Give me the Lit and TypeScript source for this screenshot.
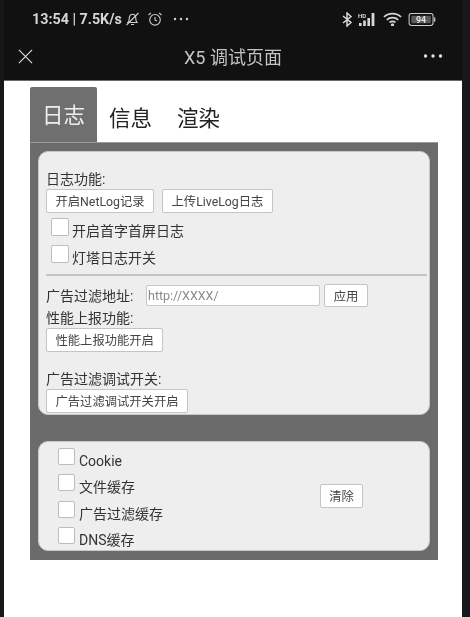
import { LitElement, html, css } from "lit";
import { customElement } from "lit/decorators.js";

@customElement("app-root")
export class AppRoot extends LitElement {
  static styles = css`
    :host {
      display: block;
      width: 470px;
      height: 617px;
      overflow: hidden;
      background: #17181a;
      font-family: "Roboto", "Noto Sans CJK SC", sans-serif;
      color: #333;
    }
    .screen {
      margin-left: 4px;
      width: 458px;
      height: 617px;
      background: #fff;
      filter: blur(0.3px);
    }
    .top {
      background: #111112;
      height: 80px;
      border-bottom: 1px solid #6a6a6a;
    }
    .status {
      height: 40px;
      display: flex;
      align-items: center;
      padding: 0 26px 2px 28px;
      box-sizing: border-box;
      color: #d6d6d6;
    }
    .time {
      font-size: 14.3px;
      font-weight: 700;
      white-space: nowrap;
    }
    .sicons {
      display: flex;
      align-items: center;
      gap: 7px;
      margin-left: 3px;
    }
    .ricons {
      display: flex;
      align-items: center;
      gap: 6px;
      margin-left: auto;
    }
    svg {
      display: block;
      flex: none;
    }
    .nav {
      height: 40px;
      display: grid;
      grid-template-columns: 60px 1fr 60px;
      align-items: center;
      padding-bottom: 8px;
      box-sizing: border-box;
    }
    .close {
      margin-left: 14px;
    }
    .title {
      text-align: center;
      font-size: 18px;
      color: #c4c4c4;
      white-space: nowrap;
    }
    .more {
      justify-self: end;
      margin-right: 19px;
    }
    .tabs {
      display: flex;
      align-items: flex-end;
      margin: 6px 0 0 26px;
      height: 55px;
    }
    .tab {
      font-size: 21.5px;
      color: #222;
      line-height: 30px;
      padding-bottom: 8px;
      margin-right: 25px;
    }
    .tab.active {
      width: 67px;
      height: 55px;
      box-sizing: border-box;
      background: #6f6f6f;
      border-radius: 2px 2px 0 0;
      color: #eee;
      text-align: center;
      line-height: 57px;
      padding: 0;
      margin-right: 12px;
    }
    .panel {
      margin-left: 26px;
      width: 408px;
      height: 418px;
      box-sizing: border-box;
      background: #6b6b6b;
      border-top: 1px solid #9a9a9a;
      padding: 8px;
    }
    .card {
      box-sizing: border-box;
      background: #eee;
      border: 1px solid #c8c8c8;
      border-radius: 10px;
    }
    .log {
      height: 264px;
      padding: 18px 0 0 7px;
    }
    .label {
      font-size: 14px;
      line-height: 18px;
      color: #333;
      white-space: nowrap;
    }
    .btn {
      box-sizing: border-box;
      height: 24px;
      display: inline-flex;
      align-items: center;
      justify-content: center;
      background: #fff;
      border: 1px solid #c4c4c4;
      border-radius: 2px;
      font-size: 12.3px;
      color: #444;
      white-space: nowrap;
      padding: 0 8.5px;
    }
    .row {
      display: flex;
      gap: 8px;
      margin-top: 1px;
    }
    .check {
      display: flex;
      gap: 3px;
      height: 22px;
      margin: 5px 0 0 5px;
    }
    .box {
      box-sizing: border-box;
      width: 18px;
      height: 18px;
      background: #fff;
      border: 1px solid #bdbdbd;
      border-radius: 2px;
    }
    .check .label {
      margin-top: 4px;
    }
    hr {
      border: 0;
      height: 2px;
      background: #c4c4c4;
      margin: 7px 2px 8px 0;
    }
    .addr {
      display: flex;
      align-items: center;
      height: 23px;
    }
    .addr .label {
      width: 100px;
    }
    .input {
      box-sizing: border-box;
      width: 174px;
      height: 21px;
      background: #fff;
      border: 1px solid #c8c8c8;
      border-radius: 2px;
      font-size: 12.5px;
      line-height: 19px;
      color: #8a8a8a;
      padding-left: 1px;
    }
    .apply {
      width: 44px;
      height: 23px;
      margin-left: 4px;
      padding: 0;
    }
    .perf {
      margin-top: 2px;
    }
    .ad {
      margin-top: 18px;
    }
    .cache {
      height: 110px;
      margin-top: 26px;
      display: flex;
      align-items: flex-start;
      padding: 6px 0 0 19px;
    }
    .items {
      width: 262px;
      display: flex;
      flex-direction: column;
      gap: 4.3px;
    }
    .item {
      display: flex;
      gap: 4px;
      height: 22px;
    }
    .item .box {
      width: 17px;
      height: 17px;
    }
    .item .label {
      margin-top: 4px;
    }
    .clear {
      width: 43px;
      margin-top: 36px;
      padding: 0;
    }
  `;

  private checkRow(t: string) {
    return html`<div class="check"><span class="box"></span><span class="label">${t}</span></div>`;
  }

  private item(t: string) {
    return html`<div class="item"><span class="box"></span><span class="label">${t}</span></div>`;
  }

  render() {
    return html`
      <div class="screen">
        <div class="top">
          <div class="status">
            <span class="time">13:54 | 7.5K/s</span>
            <div class="sicons">
              <svg width="15" height="16" viewBox="0 0 15 16" fill="none" stroke="#cfcfcf" stroke-width="1.1">
                <path d="M3 11.5c1-1 1.2-2 1.2-4C4.200 5 5.700 3.300 7.500 3.300S10.800 5 10.800 7.500c0 2 .2 3 1.200 4z" />
                <path d="M6 13.500h3M1.500 14L13.500 2" />
              </svg>
              <svg width="16" height="16" viewBox="0 0 16 16" fill="none" stroke="#cfcfcf" stroke-width="1.1">
                <circle cx="8" cy="8.800" r="5.300" />
                <path d="M8 6v3l2 1M1.500 4L4 1.800M14.500 4L12 1.800" />
              </svg>
            </div>
            <svg width="27" height="16" viewBox="0 0 27 16" fill="#d6d6d6">
              <circle cx="12" cy="8" r="1.200" /><circle cx="18" cy="8" r="1.200" /><circle cx="24" cy="8" r="1.200" />
            </svg>
            <div class="ricons">
              <svg width="10" height="15" viewBox="0 0 10 15" fill="none" stroke="#d6d6d6" stroke-width="1.500">
                <path d="M1 4l8 6.500L5 14V1l4 3.500L1 11" />
              </svg>
              <svg width="19" height="14" viewBox="0 0 19 14">
                <text x="0" y="5.500" font-size="6" font-weight="700" fill="#d6d6d6" font-family="Roboto, sans-serif">HD</text>
                <g fill="#d6d6d6">
                  <rect x="1" y="11" width="2.600" height="3" /><rect x="5.200" y="8.500" width="2.600" height="5.500" />
                  <rect x="9.400" y="6" width="2.600" height="8" /><rect x="13.600" y="1" width="2.800" height="13" />
                </g>
              </svg>
              <svg width="19" height="14" viewBox="0 0 19 14" fill="none" stroke="#d6d6d6" stroke-width="1.700">
                <path d="M1 5C5.500.5 13.500.5 18 5M3.800 7.800c3-3 8.400-3 11.400 0M6.500 10.500c1.500-1.500 4.500-1.500 6 0" />
                <circle cx="9.500" cy="12.800" r=".8" fill="#d6d6d6" />
              </svg>
              <svg width="28" height="13" viewBox="0 0 29 14">
                <rect x=".6" y=".6" width="25.800" height="12.800" rx="2.500" fill="none" stroke="#cfcfcf" stroke-width="1.100" />
                <rect x="3" y="3" width="21" height="8" rx="1" fill="#5a5a5a" />
                <rect x="27.500" y="4.500" width="1.300" height="5" rx=".6" fill="#cfcfcf" />
                <text x="13.500" y="10.500" text-anchor="middle" font-size="9.500" font-weight="700" fill="#e2e2e2" font-family="Roboto, sans-serif">94</text>
              </svg>
            </div>
          </div>
          <div class="nav">
            <svg class="close" width="15" height="15" viewBox="0 0 16 16" fill="none" stroke="#d8d8d8" stroke-width="1.300">
              <path d="M1 1l14 14M15 1L1 15" />
            </svg>
            <div class="title">X5 调试页面</div>
            <svg class="more" width="20" height="6" viewBox="0 0 20 6" fill="#e4e4e4">
              <circle cx="2.500" cy="3" r="1.700" /><circle cx="10" cy="3" r="1.700" /><circle cx="17.500" cy="3" r="1.700" />
            </svg>
          </div>
        </div>
        <div class="tabs">
          <div class="tab active">日志</div>
          <div class="tab">信息</div>
          <div class="tab">渲染</div>
        </div>
        <div class="panel">
          <div class="card log">
            <div class="label">日志功能:</div>
            <div class="row">
              <span class="btn">开启NetLog记录</span>
              <span class="btn">上传LiveLog日志</span>
            </div>
            ${this.checkRow("开启首字首屏日志")}
            ${this.checkRow("灯塔日志开关")}
            <hr />
            <div class="addr">
              <span class="label">广告过滤地址:</span>
              <span class="input">http://XXXX/</span>
              <span class="btn apply">应用</span>
            </div>
            <div class="label perf">性能上报功能:</div>
            <div class="row"><span class="btn">性能上报功能开启</span></div>
            <div class="label ad">广告过滤调试开关:</div>
            <div class="row"><span class="btn">广告过滤调试开关开启</span></div>
          </div>
          <div class="card cache">
            <div class="items">
              ${this.item("Cookie")}
              ${this.item("文件缓存")}
              ${this.item("广告过滤缓存")}
              ${this.item("DNS缓存")}
            </div>
            <span class="btn clear">清除</span>
          </div>
        </div>
      </div>
    `;
  }
}
